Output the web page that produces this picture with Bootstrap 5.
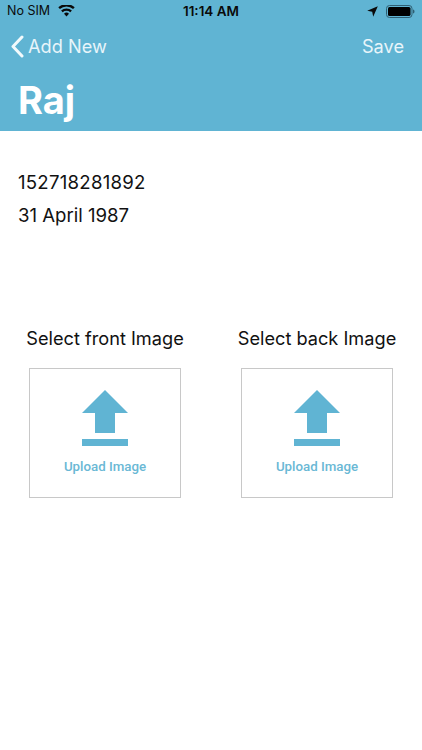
<!DOCTYPE html>
<html lang="en">
<head>
<meta charset="utf-8">
<title>Add New</title>
<link href="https://cdn.jsdelivr.net/npm/bootstrap@5.3.0/dist/css/bootstrap.min.css" rel="stylesheet">
<style>
html,body{height:100%;background:#fff;}
body{font-family:Inter,"Liberation Sans",sans-serif;color:#111;overflow:hidden;}
.app-head{background:#60b4d3;height:131px;color:#fff;}
.status-row{height:22px;padding:0 7px;font-size:12.5px;color:#0a0a0a;line-height:22px;position:relative;}
.status-time{position:absolute;left:0;right:0;top:0;text-align:center;font-weight:600;font-size:13.5px;}
.nav-row{height:44px;padding:0 18px 0 10px;font-size:18.2px;margin-top:3px;}
.nav-row span{color:#e8f5fa;}
.big-title{font-size:38px;font-weight:700;line-height:46px;margin:8px 0 0 18px;}
.id-block{padding:35px 18px 0;font-size:18.6px;line-height:33px;color:#111;height:196px;}
.id-num{letter-spacing:.25px;}
.pick-row{padding:0 29px;justify-content:space-between;}
.pick-col{width:152px;}
.pick-label{font-size:18.2px;line-height:22px;text-align:center;white-space:nowrap;margin:0 -20px 19px;color:#111;}
.pick-box{height:130px;border:1px solid #c8c8c8;padding-top:21px;}
.pick-text{font-family:Roboto,"Liberation Sans",sans-serif;font-weight:500;font-size:13.3px;line-height:16px;color:#6ab8d5;margin-top:13px;}
</style>
</head>
<body>
<header class="app-head">
  <div class="status-row d-flex align-items-center">
    <span>No SIM</span>
    <svg class="ms-2" width="17" height="12" viewBox="0 0 17 12"><path d="M8.5 11.6 6 8.7a3.6 3.6 0 0 1 5 0zM4.7 7.3 3.1 5.5a8 8 0 0 1 10.8 0l-1.6 1.8a5.6 5.6 0 0 0-7.6 0zM1.9 4.1.3 2.3a12.2 12.2 0 0 1 16.4 0l-1.6 1.8a9.8 9.8 0 0 0-13.2 0z" fill="#0a0a0a"/></svg>
    <span class="status-time">11:14 AM</span>
    <div class="ms-auto d-flex align-items-center">
      <svg width="11" height="11" viewBox="0 0 11 11"><path d="M10.8.2 6.2 10.8 5.2 5.8.2 4.8z" fill="#0a0a0a"/></svg>
      <svg class="ms-2" width="29" height="13" viewBox="0 0 29 13"><rect x=".5" y=".5" width="25.5" height="12" rx="3" fill="none" stroke="#2f5f73"/><rect x="2" y="2" width="22.5" height="9" rx="1.6" fill="#000"/><path d="M27 4.5c1 .2 1.5 1 1.5 2s-.5 1.8-1.5 2z" fill="#2f5f73"/></svg>
    </div>
  </div>
  <div class="nav-row d-flex align-items-center justify-content-between">
    <div class="d-flex align-items-center">
      <svg width="14" height="23" viewBox="0 0 14 23"><path d="M12 2 3 11.5 12 21" fill="none" stroke="#f2fafc" stroke-width="3" stroke-linecap="round" stroke-linejoin="round"/></svg>
      <span class="ms-1">Add New</span>
    </div>
    <span>Save</span>
  </div>
  <h1 class="big-title">Raj</h1>
</header>
<main>
  <div class="id-block">
    <div class="id-num">152718281892</div>
    <div>31 April 1987</div>
  </div>
  <div class="pick-row d-flex">
    <div class="pick-col">
      <div class="pick-label">Select front Image</div>
      <div class="pick-box d-flex flex-column align-items-center">
        <svg width="46" height="56" viewBox="0 0 46 56"><path d="M23 0 46 23H33V43H13V23H0zM0 49H46V56H0z" fill="#60b4d3"/></svg>
        <div class="pick-text">Upload Image</div>
      </div>
    </div>
    <div class="pick-col">
      <div class="pick-label">Select back Image</div>
      <div class="pick-box d-flex flex-column align-items-center">
        <svg width="46" height="56" viewBox="0 0 46 56"><path d="M23 0 46 23H33V43H13V23H0zM0 49H46V56H0z" fill="#60b4d3"/></svg>
        <div class="pick-text">Upload Image</div>
      </div>
    </div>
  </div>
</main>
<script src="https://cdn.jsdelivr.net/npm/bootstrap@5.3.0/dist/js/bootstrap.bundle.min.js"></script>
</body>
</html>
